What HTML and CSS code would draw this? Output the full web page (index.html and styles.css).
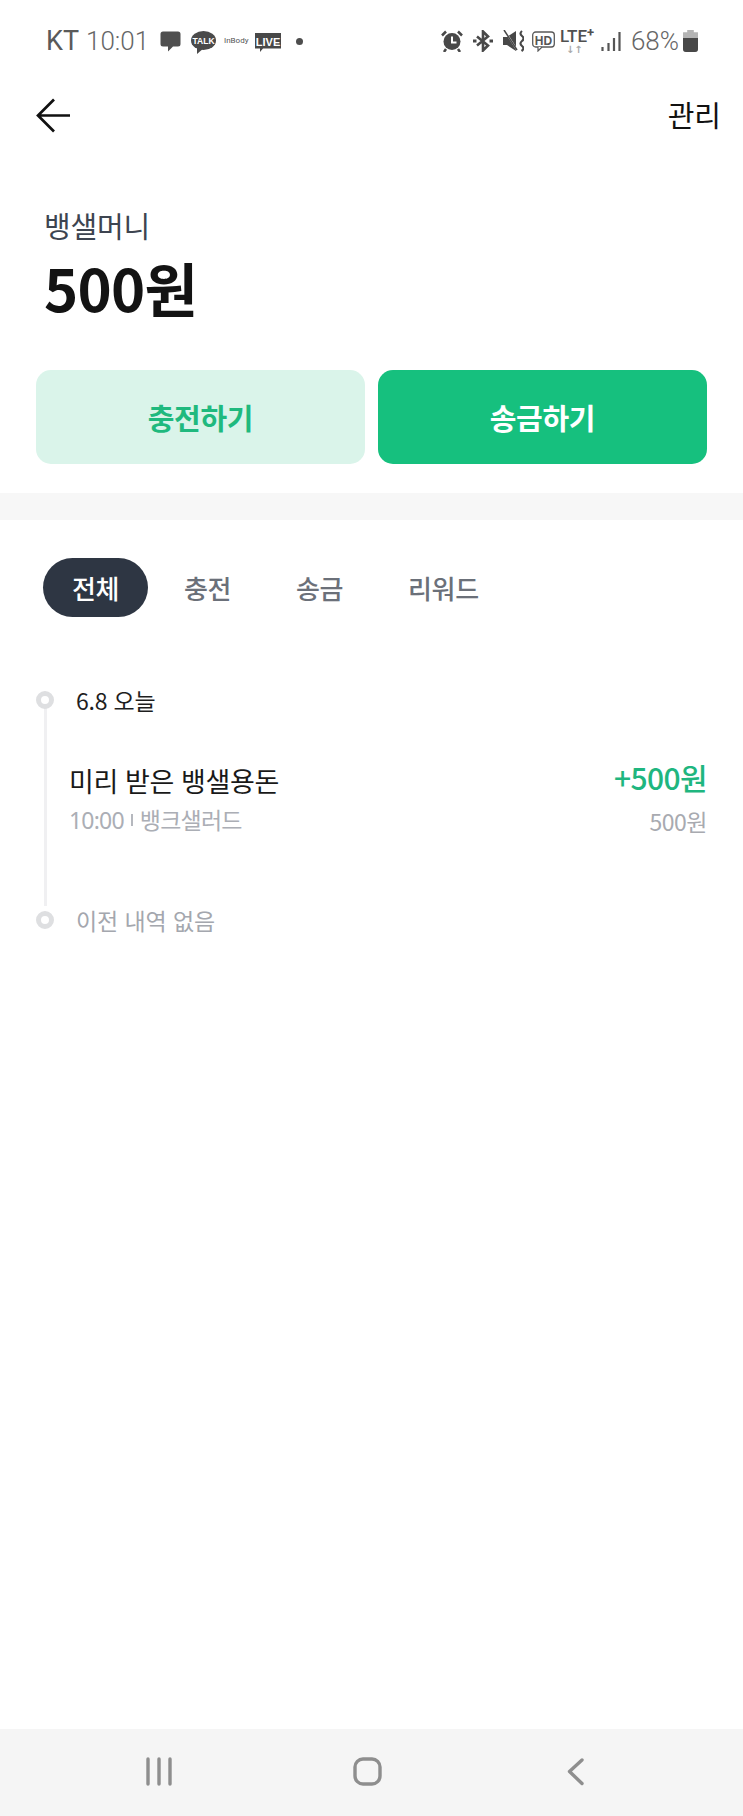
FILE: index.html
```html
<!DOCTYPE html>
<html lang="ko">
<head>
<meta charset="utf-8">
<title>뱅샐머니</title>
<link rel="stylesheet" href="styles.css">
</head>
<body>
<div class="screen">
  <div class="status">
    <div class="status-left">
      <span class="carrier">KT</span>
      <span class="clock">10:01</span>
      <svg class="ic" width="21" height="21" viewBox="0 0 21 21"><path d="M3 0.500h15a2.500 2.500 0 0 1 2.500 2.500v10a2.500 2.500 0 0 1-2.500 2.500h-5l-5 5v-5H3a2.500 2.500 0 0 1-2.500-2.500V3A2.500 2.500 0 0 1 3 .5z" fill="#4f4f4f"/></svg>
      <svg class="ic talk" width="25" height="23" viewBox="0 0 25 23"><ellipse cx="12.500" cy="9.500" rx="12.500" ry="9.500" fill="#4a4a4a"/><path d="M6 15l0 8 7-6z" fill="#4a4a4a"/><text x="12.500" y="12.500" text-anchor="middle" class="talk-text">TALK</text></svg>
      <span class="inbody">InBody</span>
      <svg class="ic live" width="26" height="19" viewBox="0 0 26 19"><path d="M0 0h26v15.500H8l-3 3.500v-3.500H0z" fill="#484848"/><text x="13" y="12.500" text-anchor="middle" class="live-text">LIVE</text></svg>
      <span class="dot"></span>
    </div>
    <div class="status-right">
      <svg class="ic" width="22" height="22" viewBox="0 0 22 22"><circle cx="11" cy="11.500" r="8.500" fill="#484848"/><path d="M11 6.500v6h4.500" fill="none" stroke="#fff" stroke-width="2"/><path d="M1 5.500l4-4M21 5.500l-4-4M5 19l-2 3M17 19l2 3" stroke="#484848" stroke-width="2.500"/></svg>
      <svg class="ic bt" width="20" height="22" viewBox="0 0 20 22"><path d="M4 6.500l11 9-5 5V1.500l5 5-11 9" fill="none" stroke="#484848" stroke-width="2.600"/><path d="M0 11h3.500M16.500 11H20" stroke="#484848" stroke-width="3"/></svg>
      <svg class="ic mute" width="21" height="22" viewBox="0 0 21 22"><path d="M0 7h4l9-6v20l-9-6H0z" fill="#484848"/><path d="M2 1l12 19" stroke="#fff" stroke-width="1.600"/><path d="M1 0l13 20" stroke="#484848" stroke-width="1.500"/><path d="M19 1q-3 2.500 0 5t0 5 0 5-.500 5" fill="none" stroke="#484848" stroke-width="2.200"/></svg>
      <svg class="ic hd" width="23" height="22" viewBox="0 0 23 22"><rect x=".7" y="2" width="21.600" height="15" rx="3" fill="none" stroke="#5a5a5a" stroke-width="1.300"/><path d="M6 17v4l4-4" fill="#fff" stroke="#5a5a5a" stroke-width="1.200"/><text x="11.500" y="14.500" text-anchor="middle" class="hd-text">HD</text></svg>
      <div class="lte"><span class="lte-text">LTE<sup class="lte-plus">+</sup></span><span class="lte-arrows">↓↑</span></div>
      <svg class="ic signal" width="20" height="21" viewBox="0 0 20 21"><path d="M1.500 16v4M7.500 12v8M13 7v13M18.500 1v19" stroke="#555" stroke-width="2.200"/></svg>
      <span class="battery-text">68%</span>
      <div class="battery"><span class="battery-fill"></span></div>
    </div>
  </div>

  <header class="topbar">
    <svg class="back" width="36" height="36" viewBox="0 0 36 36"><path d="M34 17.500H3M18 1.500L2 17.500 18 33.500" fill="none" stroke="#111" stroke-width="2.700"/></svg>
    <span class="manage">관리</span>
  </header>

  <section class="balance">
    <div class="balance-label">뱅샐머니</div>
    <div class="balance-value">500원</div>
  </section>

  <div class="actions">
    <button class="btn btn-soft">충전하기</button>
    <button class="btn btn-solid">송금하기</button>
  </div>

  <div class="band"></div>

  <nav class="tabs">
    <span class="tab tab-active">전체</span>
    <span class="tab tab-a">충전</span>
    <span class="tab tab-b">송금</span>
    <span class="tab tab-c">리워드</span>
  </nav>

  <section class="timeline">
    <div class="tl-head">
      <span class="tl-dot"></span>
      <span class="tl-date">6.8 오늘</span>
    </div>
    <div class="tl-item">
      <div class="item-main">
        <div class="item-title">미리 받은 뱅샐용돈</div>
        <div class="item-sub">10:00<span class="sep"></span>뱅크샐러드</div>
      </div>
      <div class="item-side">
        <div class="item-amount">+500원</div>
        <div class="item-balance">500원</div>
      </div>
    </div>
    <div class="tl-head tl-end">
      <span class="tl-dot"></span>
      <span class="tl-none">이전 내역 없음</span>
    </div>
  </section>

  <div class="spacer"></div>

  <footer class="navbar">
    <svg class="nav-menu" width="26" height="29" viewBox="0 0 26 29"><path d="M2 2v25M13 2v25M24 2v25" stroke="#8e8e8e" stroke-width="3.400" stroke-linecap="round"/></svg>
    <svg class="nav-home" width="29" height="29" viewBox="0 0 29 29"><rect x="2" y="2" width="25" height="25" rx="8" fill="none" stroke="#8e8e8e" stroke-width="3.400"/></svg>
    <svg class="nav-back" width="17" height="29" viewBox="0 0 17 29"><path d="M15 3L2.500 14.500 15 26.500" fill="none" stroke="#8e8e8e" stroke-width="3.400" stroke-linecap="round" stroke-linejoin="round"/></svg>
  </footer>
</div>
</body>
</html>
```

FILE: styles.css
```css
* { box-sizing: border-box; }
html, body { margin: 0; padding: 0; background: #fff; }
body { font-family: "Noto Sans CJK KR", "Noto Sans", sans-serif; color: #111; }
.screen { width: 743px; height: 1816px; display: flex; flex-direction: column; overflow: hidden; }

.status { height: 82px; padding: 26px 45px 0 46px; display: flex; justify-content: space-between; align-items: flex-start; color: #555; }
.status-left, .status-right { display: flex; align-items: center; height: 30px; }
.ic { display: block; flex: none; }
.carrier { font: 400 27px/30px "Roboto", sans-serif; color: #5a5a5a; width: 40px; }
.clock { font: 300 26px/30px "Roboto", sans-serif; color: #666; width: 74px; }
.talk { margin-left: 10px; margin-top: 2px; }
.talk-text { font: 700 8.500px "Liberation Sans", sans-serif; fill: #fff; }
.inbody { font: 400 8px/20px "Roboto", sans-serif; color: #555; margin-left: 8px; width: 31px; }
.live { margin-top: 3px; }
.live-text { font: 700 11px "Liberation Sans", sans-serif; fill: #fff; }
.dot { width: 7px; height: 7px; border-radius: 50%; background: #4d4d4d; margin-left: 15px; }
.bt { margin-left: 10px; }
.mute { margin-left: 10px; }
.hd { margin-left: 8px; }
.hd-text { font: 700 12px "Liberation Sans", sans-serif; fill: #555; }
.lte { width: 36px; margin-left: 5px; display: flex; flex-direction: column; align-items: flex-start; }
.lte-text { font: 500 17px/17px "Roboto", sans-serif; color: #505050; white-space: nowrap; }
.lte-plus { font-size: 13px; font-weight: 700; line-height: 0; vertical-align: 5px; }
.lte-arrows { font: 700 10px/9px "DejaVu Sans", sans-serif; color: #aaa; margin-left: 6px; }
.signal { margin-left: 5px; }
.battery-text { font: 300 26px/30px "Roboto", sans-serif; color: #666; margin-left: 10px; }
.battery { width: 15px; height: 22px; margin-left: 4px; border-radius: 3px; background: #b4b4b4; display: flex; align-items: flex-end; overflow: hidden; clip-path: polygon(28% 0, 72% 0, 72% 10%, 100% 10%, 100% 100%, 0 100%, 0 10%, 28% 10%); }
.battery-fill { display: block; width: 100%; height: 14px; background: #484848; }

.topbar { height: 36px; margin-top: 16px; padding: 0 22px 0 36px; display: flex; justify-content: space-between; align-items: center; }
.manage { font-size: 29px; line-height: 36px; font-weight: 400; color: #111; margin-bottom: 4px; }

.balance { padding: 0 44px; margin-top: 74px; }
.balance-label { font-size: 29px; line-height: 34px; color: #3d4450; letter-spacing: -0.2px; }
.balance-value { font-size: 58px; line-height: 70px; font-weight: 700; color: #131313; letter-spacing: -0.7px; margin-top: 10px; }

.actions { display: flex; gap: 13px; padding: 0 36px; margin-top: 48px; }
.btn { flex: none; width: 329px; height: 94px; border: 0; border-radius: 15px; font-family: inherit; font-size: 29px; font-weight: 700; letter-spacing: -0.3px; padding: 0; }
.btn-soft { background: #daf4ea; color: #1fb97e; }
.btn-solid { background: #16c07e; color: #fff; }

.band { height: 27px; background: #f7f7f7; margin-top: 29px; }

.tabs { display: flex; align-items: center; height: 59px; margin-top: 38px; padding-left: 43px; }
.tab { font-size: 26px; line-height: 59px; font-weight: 500; color: #6b7079; letter-spacing: -0.4px; }
.tab-active { width: 105px; text-align: center; border-radius: 30px; background: #2e3643; color: #fff; }
.tab-a { margin-left: 36px; }
.tab-b { margin-left: 65px; }
.tab-c { margin-left: 65px; }

.timeline { margin-top: 68px; padding: 0 36px; position: relative; }
.timeline::before { content: ""; position: absolute; left: 43.500px; top: 16px; width: 3px; height: 205px; background: #f0f0f2; }
.tl-head { display: flex; align-items: center; height: 30px; position: relative; }
.tl-dot { width: 18px; height: 18px; border-radius: 50%; border: 5px solid #dedfe1; background: #fff; flex: none; }
.tl-date { margin-left: 22px; font-size: 23px; line-height: 30px; color: #1e1e1e; letter-spacing: -0.2px; }
.tl-none { margin-left: 22px; font-size: 23px; line-height: 30px; color: #a4a7ae; letter-spacing: -0.1px; }
.tl-item { display: flex; justify-content: space-between; margin-top: 48px; padding-left: 33px; }
.item-title { font-size: 27px; line-height: 36px; color: #191919; letter-spacing: -0.4px; }
.item-sub { font-family: "Noto Sans", "Noto Sans CJK KR", sans-serif; font-size: 23px; line-height: 32px; color: #abaeb5; margin-top: 5px; display: flex; align-items: center; letter-spacing: -0.8px; }
.sep { width: 2px; height: 12px; background: #b5b8be; margin: 0 7px 0 7px; }
.item-side { text-align: right; }
.item-amount { font-size: 30px; line-height: 36px; font-weight: 500; color: #1fb67f; letter-spacing: -0.6px; margin-top: -4px; }
.item-balance { font-size: 23px; line-height: 32px; color: #a8aab0; margin-top: 10px; letter-spacing: -0.5px; }
.tl-end { margin-top: 68px; }

.spacer { flex: 1; }
.navbar { height: 87px; background: #f5f5f5; display: flex; align-items: flex-start; padding: 28px 0 0 146px; }
.nav-home { margin-left: 181px; }
.nav-back { margin-left: 185px; }
```
